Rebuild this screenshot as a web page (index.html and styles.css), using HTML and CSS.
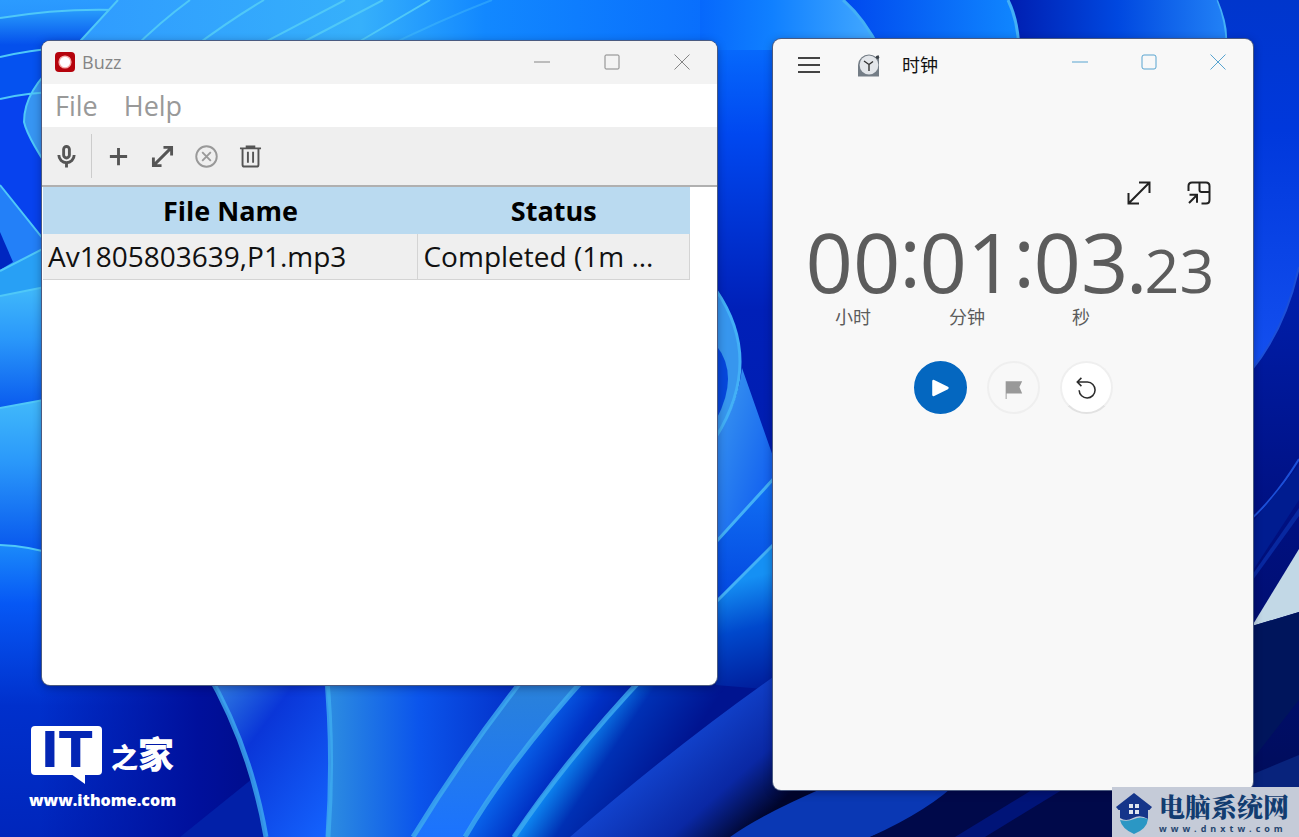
FILE: index.html
```html
<!DOCTYPE html>
<html lang="zh-CN">
<head>
<meta charset="utf-8">
<meta name="viewport" content="width=device-width, initial-scale=1">
<title>Buzz</title>
<link rel="stylesheet" href="styles.css">
</head>
<body>
<svg class="wallpaper" viewBox="0 0 1299 837" preserveAspectRatio="none" aria-hidden="true">
  <defs>
    <linearGradient id="base" x1="0" y1="0" x2="0" y2="1"><stop offset="0" stop-color="#0668fc"/><stop offset=".06" stop-color="#0668fc"/><stop offset=".16" stop-color="#0048f0"/><stop offset=".37" stop-color="#0020b8"/><stop offset="1" stop-color="#00149a"/></linearGradient>
    <linearGradient id="tl" x1="0" y1="0" x2="0" y2="1"><stop offset="0" stop-color="#2b9bff"/><stop offset="1" stop-color="#0048ea"/></linearGradient>
    <linearGradient id="tl2" x1="0" y1="0" x2="0" y2="1"><stop offset="0" stop-color="#289cfc"/><stop offset=".7" stop-color="#0450ec"/><stop offset="1" stop-color="#0450ec"/></linearGradient>
    <linearGradient id="sky" x1="0" y1="0" x2="1" y2="0"><stop offset="0" stop-color="#2f9bff"/><stop offset=".42" stop-color="#36b0fb"/><stop offset=".6" stop-color="#1288ff"/><stop offset="1" stop-color="#0668fc"/></linearGradient>
    <linearGradient id="ribbon" x1="0" y1="0" x2="0" y2="1"><stop offset="0" stop-color="#42bbfa"/><stop offset=".4" stop-color="#2a98fa"/><stop offset="1" stop-color="#0450ec"/></linearGradient>
    <linearGradient id="leftlow" x1="0" y1="0" x2="0" y2="1"><stop offset="0" stop-color="#1b8afa"/><stop offset=".2" stop-color="#0658f5"/><stop offset=".55" stop-color="#0030cc"/><stop offset="1" stop-color="#0026bc"/></linearGradient>
    <linearGradient id="dark" x1="0" y1="0" x2="1" y2="0"><stop offset="0" stop-color="#00109c" stop-opacity="0"/><stop offset=".12" stop-color="#00109c" stop-opacity="0"/><stop offset=".6" stop-color="#00109c"/><stop offset="1" stop-color="#000a78"/></linearGradient>
    <linearGradient id="b1" x1="0" y1="0" x2="1" y2="1"><stop offset="0" stop-color="#3a90e4"/><stop offset=".4" stop-color="#0a36d8"/><stop offset="1" stop-color="#1464ff"/></linearGradient>
    <linearGradient id="b2" x1="0" y1="0" x2="1" y2="0"><stop offset="0" stop-color="#2e8fe0"/><stop offset=".4" stop-color="#0b55ec"/><stop offset="1" stop-color="#0020b8"/></linearGradient>
    <linearGradient id="b3" x1="0" y1="0" x2="0" y2="1"><stop offset="0" stop-color="#2b83d6"/><stop offset="1" stop-color="#1b73ff"/></linearGradient>
    <linearGradient id="b4" gradientUnits="userSpaceOnUse" x1="530" y1="740" x2="610" y2="790"><stop offset="0" stop-color="#0860e8"/><stop offset=".4" stop-color="#0030c4"/><stop offset="1" stop-color="#001490"/></linearGradient>
    <linearGradient id="b6" gradientUnits="userSpaceOnUse" x1="575" y1="750" x2="650" y2="800"><stop offset="0" stop-color="#0c84f0"/><stop offset=".35" stop-color="#0030b4"/><stop offset="1" stop-color="#001490"/></linearGradient>
    <linearGradient id="b5" gradientUnits="userSpaceOnUse" x1="670" y1="740" x2="750" y2="830"><stop offset="0" stop-color="#1245d0"/><stop offset=".6" stop-color="#0a28a4"/><stop offset="1" stop-color="#00052c"/></linearGradient>
    <linearGradient id="petal" x1="0" y1="0" x2="1" y2="0"><stop offset="0" stop-color="#0668fc"/><stop offset=".4" stop-color="#1080ff"/><stop offset="1" stop-color="#45aaff"/></linearGradient>
    <linearGradient id="t2" x1="0" y1="0" x2="1" y2="0"><stop offset="0" stop-color="#0048ee"/><stop offset="1" stop-color="#1087ff"/></linearGradient>
    <linearGradient id="t3" x1="0" y1="0" x2="1" y2="0"><stop offset="0" stop-color="#001eb0"/><stop offset=".5" stop-color="#0048e0"/><stop offset="1" stop-color="#2282f6"/></linearGradient>
    <linearGradient id="right" x1="0" y1="0" x2="0" y2="1"><stop offset="0" stop-color="#0036cc"/><stop offset=".35" stop-color="#0038dc"/><stop offset="1" stop-color="#1450f0"/></linearGradient>
    <linearGradient id="rdark" x1="0" y1="0" x2="0" y2="1"><stop offset="0" stop-color="#001fae"/><stop offset=".45" stop-color="#001080"/><stop offset="1" stop-color="#000c54"/></linearGradient>
    <linearGradient id="strip" x1="0" y1="0" x2="1" y2="1"><stop offset="0" stop-color="#3d9bf0"/><stop offset="1" stop-color="#0650f0"/></linearGradient>
    <linearGradient id="strip2" x1="0" y1="0" x2="0" y2="1"><stop offset="0" stop-color="#1272f5"/><stop offset="1" stop-color="#0040dc"/></linearGradient>
    <linearGradient id="strip3" gradientUnits="userSpaceOnUse" x1="740" y1="580" x2="770" y2="700"><stop offset="0" stop-color="#1590f4"/><stop offset=".4" stop-color="#0048cc"/><stop offset="1" stop-color="#001490"/></linearGradient>
  </defs>
  <rect width="1299" height="837" fill="url(#base)"/>
  <rect width="130" height="240" fill="url(#tl)"/>
  <path d="M0 18Q60 8 118 10V60H0Z" fill="url(#tl2)"/>
  <path d="M0 57Q30 50 60 48V100H0Z" fill="#0552f0"/>
  <path d="M0 99Q30 92 60 92V250H0Z" fill="#0742ee"/>
  <path d="M60 60Q24 90 24 122Q28 140 60 185Z" fill="#3795f2"/>
  <path class="edge" d="M0 18Q60 8 118 10M0 57Q30 50 60 48M0 99Q30 92 60 92M60 60Q24 90 24 122Q28 140 60 185"/>
  <path d="M118 0H760V50H72Z" fill="url(#sky)"/>
  <path class="edge" d="M118 0L72 50M190 0Q160 22 132 50M264 0Q230 20 190 50M345 0L250 50M383 0L288 50M430 0L345 50"/>
  <path class="edge faint" d="M492 0Q440 20 380 50"/>
  <path d="M700 0H843Q864 18 880 50H700Z" fill="url(#petal)"/>
  <path d="M843 0H1010Q1018 20 1019 50H880Q864 18 843 0Z" fill="url(#t2)"/>
  <path d="M1008 0H1218Q1228 24 1227 50H1019Q1018 20 1008 0Z" fill="url(#t3)"/>
  <path class="edge-line" d="M843 0Q864 18 880 50M1008 0Q1018 20 1019 50M1218 0Q1228 24 1227 50"/>
  <path d="M1218 0H1299V267Q1285 330 1250 372V40H1227Q1228 24 1218 0Z" fill="url(#right)"/>
  <path d="M1299 267Q1285 330 1250 372V837H1299Z" fill="url(#rdark)"/>
  <path class="faint-line" d="M1299 267Q1285 330 1250 372M1299 459Q1275 498 1250 520"/>
  <path d="M1299 465L1250 525V575L1299 500Z" fill="#001c90"/>
  <path d="M1299 508L1250 578V584L1299 516Z" fill="#0828a0"/>
  <path d="M1299 549L1252 626L1299 612Z" fill="#c2d8e6"/>
  <path d="M1299 612L1252 626V760L1299 700Z" fill="#00155c"/>
  <path d="M1299 755L1100 837H1299Z" fill="#08237c"/>

  <path d="M0 185L60 260V420H0Z" fill="#2380f8"/>
  <path d="M0 232L13 262L0 270Z" fill="#0026c0"/>
  <path d="M0 271L60 240V300H0Z" fill="#28a0f5"/>
  <path d="M0 296L60 284V420H0Z" fill="url(#ribbon)"/>
  <path d="M0 408L60 397V560H0Z" fill="url(#ribbon)"/>
  <path d="M0 545Q30 546 60 556V670H330V837H0Z" fill="url(#leftlow)"/>
  <path class="edge" d="M0 185L60 260M0 271L60 240M0 296L60 284M0 408L60 397M0 545Q30 546 60 556"/>
  <path d="M0 660H330V837H0Z" fill="url(#dark)"/>
  <path d="M180 837L268 766V837Z" fill="#0220a8"/>
  <path d="M206 670Q250 745 266 837H330V670Z" fill="url(#b1)"/>
  <path d="M324 670Q336 750 326 837H560V670Z" fill="url(#b2)"/>
  <path class="thick-line" d="M206 670Q250 745 266 837M326 670Q334 750 328 837"/>
  <path d="M530 670Q465 752 413 837H620V670Z" fill="url(#b3)"/>
  <path d="M592 670Q510 760 463 837H690V670Z" fill="url(#b4)"/>
  <path d="M650 670Q570 754 512 837H790V600H730Z" fill="url(#b6)"/>
  <path class="thick-line" d="M530 670Q465 752 413 837M592 670Q510 760 465 837M650 670Q570 754 514 837"/>

  <path d="M716 290Q764 360 716 437Z" fill="#3796ee"/>
  <path d="M716 345Q740 375 716 420Z" fill="#0648dc"/>
  <path d="M742 368L776 465V490L716 555V437Q738 405 742 368Z" fill="url(#strip)"/>
  <path d="M716 542L776 476V560L716 620Z" fill="url(#strip2)"/>
  <path d="M716 602L776 542V690L716 685Z" fill="url(#strip3)"/>
  <path class="edge-line" d="M716 290Q764 360 716 437M716 542L776 476M716 602L776 542"/>
  <path d="M776 675Q675 746 570 837H1112V780H776Z" fill="url(#b5)"/>
  <path d="M830 785Q760 815 730 837H870Q930 815 960 780Z" fill="#0a38b4"/>
  <path d="M870 837Q930 810 960 780H1120V837Z" fill="#00094a"/>
  <path d="M955 837L1040 785H1070L985 837Z" fill="#001478"/>
</svg>

<main class="desktop">
  <section class="window buzz" aria-label="Buzz">
    <header class="titlebar">
      <svg class="app-icon" viewBox="0 0 20 20" aria-hidden="true"><rect width="20" height="20" rx="4" fill="#b5030c"/><circle cx="10" cy="10" r="6.6" fill="#f6aaa8"/><circle cx="10" cy="10" r="5.2" fill="#fff"/></svg>
      <h1 class="title">Buzz</h1>
      <div class="controls">
        <button type="button" aria-label="Minimize"><svg viewBox="0 0 16 16"><path d="M0 8H16"/></svg></button>
        <button type="button" aria-label="Maximize"><svg viewBox="0 0 16 16"><rect x="1" y="1" width="14" height="14" rx="1"/></svg></button>
        <button type="button" aria-label="Close"><svg viewBox="0 0 16 16"><path d="M.5 .5L15.500 15.500M15.500 .5L.5 15.500"/></svg></button>
      </div>
    </header>
    <nav class="menubar"><button type="button">File</button><button type="button">Help</button></nav>
    <div class="toolbar" role="toolbar" aria-label="Tasks">
      <button type="button" class="first" aria-label="Record"><svg viewBox="0 0 24 24"><rect x="9" y="1.500" width="6" height="12" rx="3"/><path d="M4 10.500a8 8 0 0 0 16 0M12 18V23.500"/></svg></button>
      <button type="button" aria-label="Add"><svg viewBox="0 0 24 24"><path d="M12 3V21M3 12H21"/></svg></button>
      <button type="button" aria-label="Open"><svg viewBox="0 0 24 24"><path d="M3 21L21 3M13 2.500H21.500V11M2.500 13V21.500H11"/></svg></button>
      <button type="button" class="muted" aria-label="Cancel"><svg viewBox="0 0 24 24"><circle cx="12" cy="12" r="10.700"/><path d="M7.500 7.500L16.500 16.500M16.500 7.500L7.500 16.500"/></svg></button>
      <button type="button" aria-label="Delete"><svg viewBox="0 0 24 24"><path d="M1 3.500H23M8 3V1.500H16V3M3.700 4V20.500Q3.700 22.500 5.700 22.500H18.300Q20.300 22.500 20.300 20.500V4M9.300 7V18.500M14.700 7V18.500"/></svg></button>
    </div>
    <div class="listing">
      <table>
        <thead><tr><th scope="col" class="name">File Name</th><th scope="col">Status</th></tr></thead>
        <tbody><tr><td>Av1805803639,P1.mp3</td><td>Completed (1m ...</td></tr></tbody>
      </table>
    </div>
  </section>

  <section class="window clock" aria-label="时钟">
    <header class="titlebar">
      <button type="button" class="burger" aria-label="菜单"><svg viewBox="0 0 22 18"><path d="M0 2H22M0 9H22M0 16H22"/></svg></button>
      <svg class="clock-icon" viewBox="0 0 22 23" aria-hidden="true"><path d="M0 22.500V11A11 11 0 0 1 11 .5Q15 .5 18 3L21 1V22.500Z" fill="#747d86"/><circle cx="11" cy="11" r="9.400" fill="#e3e6ea"/><path d="M11 17V10.500L6 7M11 10.500L15 7.500" fill="none" stroke="#333" stroke-width="1.400"/><circle cx="19.500" cy="3.300" r="1.700" fill="#3c4248"/></svg>
      <h1 class="title">时钟</h1>
      <div class="controls">
        <button type="button" aria-label="最小化"><svg viewBox="0 0 16 16"><path d="M0 8H16"/></svg></button>
        <button type="button" aria-label="最大化"><svg viewBox="0 0 16 16"><rect x="1" y="1" width="14" height="14" rx="2"/></svg></button>
        <button type="button" aria-label="关闭"><svg viewBox="0 0 16 16"><path d="M.5 .5L15.500 15.500M15.500 .5L.5 15.500"/></svg></button>
      </div>
    </header>
    <div class="view-actions">
      <button type="button" aria-label="展开"><svg viewBox="0 0 24 24"><path d="M1.800 22.200L22.200 1.800M12 1.500H22.500V12M1.500 12V22.500H12"/></svg></button>
      <button type="button" aria-label="保持在顶部"><svg viewBox="0 0 24 24"><path d="M1.500 10V5Q1.500 1.500 5 1.500H19Q22.500 1.500 22.500 5V19Q22.500 22.500 19 22.500H14.500M12.500 1.500V9Q12.500 11 14.500 11H22.500M2 22L10 14M2.500 13.800H10V21.800"/></svg></button>
    </div>
    <div class="timer" role="timer">
      <span class="digits">00</span><span class="colon">:</span><span class="digits">01</span><span class="colon">:</span><span class="digits">03</span><span class="point">.</span><span class="fraction">23</span>
      <span class="unit hours">小时</span><span class="unit minutes">分钟</span><span class="unit seconds">秒</span>
    </div>
    <div class="actions">
      <button type="button" class="play" aria-label="开始"><svg viewBox="0 0 24 24"><path d="M5 4.500L20 12L5 19.500Z" fill="#fff" stroke="#fff" stroke-width="3" stroke-linejoin="round"/></svg></button>
      <button type="button" class="lap" aria-label="分圈" disabled><svg viewBox="0 0 24 24"><path d="M4 24V4.500H22L19 11L22 18H5V24Z" fill="#999"/></svg></button>
      <button type="button" class="reset" aria-label="重置"><svg viewBox="0 0 24 24"><path d="M3 5.500H13.500A8.700 8.700 0 1 1 4.500 14.500M7 1L2.500 5.500L7 10" fill="none" stroke="#2b2b2b" stroke-width="1.700"/></svg></button>
    </div>
  </section>
</main>

<aside class="ithome">
  <div class="ithome-logo"><span class="bubble">IT</span><span class="home"><span class="zhi">之</span>家</span></div>
  <a href="#">www.ithome.com</a>
</aside>

<aside class="site-mark">
  <svg viewBox="0 0 36 42" aria-hidden="true"><path d="M18 1L36 15L33.500 18H2.500L0 15Z" fill="#15358a"/><path d="M4 15H32V27Q24 22 17 26T4 26Z" fill="#15358a"/><path d="M4 28Q12 30 18 27T32 27Q31 37 18 42Q6 37 4 28Z" fill="#2b97c4"/><path d="M13 12H17V16H13ZM19 12H23V16H19ZM13 18H17V22H13ZM19 18H23V22H19Z" fill="#dfe5ee"/></svg>
  <div class="site-text"><strong>电脑系统网</strong><a href="#">www.dnxtw.com</a></div>
</aside>
</body>
</html>
```
FILE: styles.css
```css
* { box-sizing: border-box; }

body {
  margin: 0;
  min-height: 100vh;
  position: relative;
  overflow: hidden;
  background: #0030d0;
  font-family: "Open Sans", "Noto Sans CJK SC", sans-serif;
  color: #111;
}

button {
  display: flex;
  align-items: center;
  justify-content: center;
  margin: 0;
  padding: 0;
  border: 0;
  background: none;
  font: inherit;
  color: inherit;
}

svg { display: block; }
button svg { fill: none; stroke: currentColor; }
h1 { margin: 0; font-weight: 400; font-size: 18px; line-height: 24px; }

/* Wallpaper */
.wallpaper { position: absolute; inset: 0; width: 100%; height: 100%; }
.edge { fill: none; stroke: #4fc8f8; stroke-width: 2; }
.edge-line { fill: none; stroke: #43b0f6; stroke-width: 3; }
.thick-line { fill: none; stroke: #3eacf0; stroke-width: 5; stroke-opacity: .8; }
.faint { stroke-opacity: .35; }
.faint-line { fill: none; stroke: #1c50d8; stroke-width: 2; }

/* Windows */
.desktop {
  position: relative;
  display: flex;
  gap: 56px;
  min-height: 100vh;
  padding: 39px 46px 47px 42px;
}

.window {
  display: flex;
  flex-direction: column;
  min-width: 0;
  overflow: hidden;
  border-radius: 8px;
  box-shadow: 0 0 0 1px #4a5a80, 0 2px 10px rgba(0, 0, 40, .4);
}

.titlebar { display: flex; }
.controls { display: flex; margin-left: auto; }
.controls svg { width: 16px; height: 16px; }

/* Buzz */
.buzz { flex: 675 1 0; margin: 2px 0 105px; background: #fff; }
.buzz .titlebar { height: 43px; align-items: center; padding: 0 0 2px 13px; background: #f3f3f3; color: #858585; }
.app-icon { width: 20px; height: 20px; margin-right: 7px; }
.buzz .controls button { width: 70px; height: 40px; }

.menubar { display: flex; gap: 26px; height: 43px; padding-left: 13px; color: #999; font-size: 27px; line-height: 43px; }

.toolbar {
  display: flex;
  align-items: center;
  height: 60px;
  background: #efefef;
  border-bottom: 2px solid #b0b0b0;
  color: #555;
}
.toolbar button { width: 44px; height: 44px; }
.toolbar .first { width: 50px; margin-right: 4px; border-right: 1px solid #ccc; }
.toolbar svg { width: 23px; height: 23px; stroke-width: 3; }
.toolbar button:last-child svg { stroke-width: 2; }
.toolbar .muted { color: #999; }
.toolbar .muted svg { stroke-width: 2; }

.listing { flex: 1; padding-left: 1px; }
table { width: 96%; table-layout: fixed; border-collapse: collapse; line-height: 44px; }
th { height: 47px; padding: 0; background: #badaf0; font-size: 27px; font-weight: 700; color: #000; }
.name { width: 58%; }
td { height: 45px; padding: 0 5px; background: #efefef; border: 0 solid #d4d4d4; border-width: 0 1px 1px 0; white-space: nowrap; overflow: hidden; font-size: 28px; }

/* Clock */
.clock { flex: 480 1 0; background: #f8f8f8; }
.clock .titlebar { height: 52px; align-items: center; padding: 0 1px 0 25px; }
.burger { margin-right: 38px; color: #444; }
.burger svg { width: 22px; height: 18px; stroke-width: 2; }
.clock-icon { width: 22px; height: 23px; margin-right: 22px; }
.clock .controls { align-self: start; color: #58a4d0; }
.clock .controls button { width: 69px; height: 45px; }

.view-actions { display: flex; justify-content: flex-end; gap: 36px; margin-top: 90px; padding-right: 42px; color: #222; }
.view-actions svg { width: 24px; height: 24px; stroke-width: 2; }

.timer {
  display: grid;
  grid-template-columns: 95px 19px 95px 19px 95px 16px auto;
  grid-template-rows: 88px 24px;
  justify-content: center;
  align-items: baseline;
  margin-top: 12px;
  padding-right: 6px;
  color: #5c5c5c;
  font-size: 83px;
  line-height: 88px;
}
.colon, .point { display: flex; justify-content: center; }
.colon { align-self: start; line-height: 76px; }
.fraction { font-size: 61px; }
.unit { grid-row: 2; font-size: 18px; line-height: 24px; text-align: center; }
.hours { grid-column: 1; }
.minutes { grid-column: 3; }
.seconds { grid-column: 5; }

.actions { display: flex; justify-content: center; gap: 20px; margin-top: 32px; }
.actions button { width: 53px; height: 53px; border-radius: 50%; border: 2px solid #efefef; }
.actions svg { width: 22px; height: 22px; stroke: none; }
.actions .play { background: #0467c0; border-color: #0467c0; }
.actions .reset { background: #fff; border-bottom-color: #e2e2e2; }

/* Corner marks */
.ithome { position: absolute; left: 29px; bottom: 25px; color: #fff; }
.ithome a { display: block; color: #fff; font-size: 16px; font-weight: 800; line-height: 24px; text-decoration: none; }
.ithome-logo { display: flex; gap: 9px; height: 62px; padding-left: 2px; }
.bubble {
  position: relative;
  width: 71px;
  height: 49px;
  border-radius: 4px;
  background: #fff;
  color: #0426b4;
  font: 700 49px/49px "DejaVu Sans", sans-serif;
  text-align: center;
}
.bubble::after {
  content: "";
  position: absolute;
  left: 40px;
  top: 48px;
  width: 14px;
  height: 10px;
  background: #fff;
  clip-path: polygon(0 0, 100% 0, 100% 100%);
}
.home { font: 900 36px/52px "Noto Sans CJK SC", sans-serif; }
.zhi { font-size: 27px; }

.site-mark {
  position: absolute;
  right: 0;
  bottom: 0;
  display: flex;
  align-items: center;
  gap: 7px;
  padding: 3px 10px 1px 4px;
  background: #c5cbd8;
}
.site-mark svg { width: 36px; height: 42px; }
.site-text { display: flex; flex-direction: column; }
.site-text strong { font: 900 26px/32px "Noto Serif CJK SC", "Noto Sans CJK SC", serif; color: #123c70; }
.site-text a { font: 700 9px/14px "Open Sans", sans-serif; letter-spacing: 4px; color: #24456e; text-decoration: none; }
```
